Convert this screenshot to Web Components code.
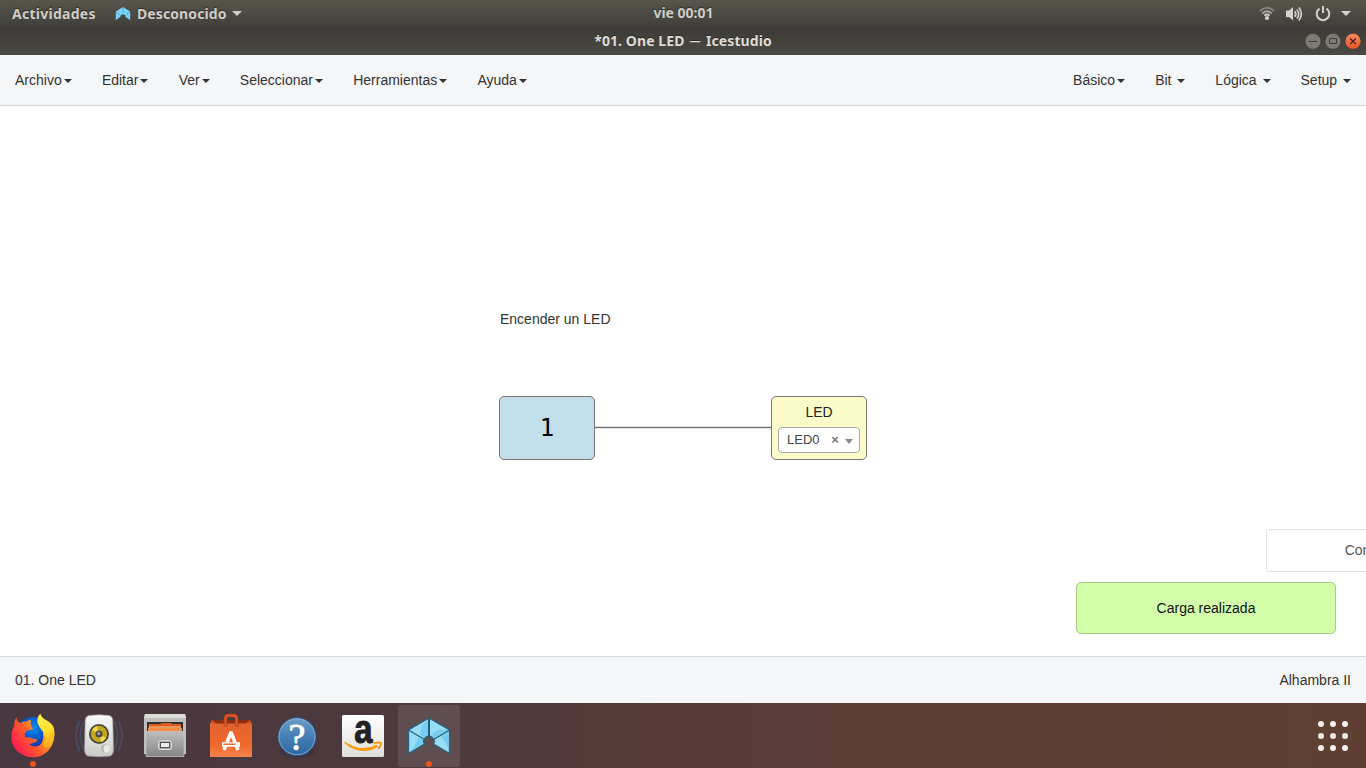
<!DOCTYPE html>
<html lang="es">
<head>
<meta charset="utf-8">
<title>Icestudio</title>
<style>
html,body{margin:0;height:100%;overflow:hidden}
body{font:14px/20px "Liberation Sans",Arial,sans-serif;color:#333;background:#fff}
</style>
</head>
<body>
<ice-desktop></ice-desktop>
<script>
const define = (name, css, html) => customElements.define(name, class extends HTMLElement {
  constructor() {
    super();
    const t = document.createElement('template');
    t.innerHTML = `<style>:host{box-sizing:border-box}*{box-sizing:border-box}svg{display:block;overflow:visible}${css}</style>${html}`;
    this.attachShadow({mode: 'open'}).appendChild(t.content.cloneNode(true));
  }
});

define('system-bar', `
:host{display:grid;grid-template-columns:1fr auto 1fr;height:27px;align-items:center;padding:0 15px 0 12px;background:linear-gradient(#58554c,#403f3a);color:#d0cdc6;font:bold 14px/20px "Noto Sans","Open Sans",sans-serif;text-shadow:0 -1px 1px #2b2a27}
.l,.r{display:flex;align-items:center}.r{justify-content:flex-end}
.act{width:83px;letter-spacing:.26px;white-space:nowrap}.app{margin-left:6px;width:90px;letter-spacing:.1px;white-space:nowrap}.logo{margin-left:20px}
.clock{position:relative;top:-1px;left:2px}
`, `
<div class="l"><span class="act">Actividades</span>
<svg class="logo" width="16" height="14" viewBox="0 0 16 14"><path fill="#78d4fa" d="M.8 4.500 8 0 15.200 4.500v8.500l-4.500-3Q10.500 7.500 8 7.300 5.500 7.500 5.300 10L.8 13Z"/><path d="M8 .5V6M1 5l4.500 3.500M15 5l-4.500 3.500" stroke="#287b9b" stroke-width=".7" stroke-dasharray="1.500 .8"/></svg>
<span class="app">Desconocido</span>
<svg style="margin-left:5px" width="10" height="5"><path fill="#d0cdc6" d="M0 0h10L5 5Z"/></svg></div>
<div class="clock">vie 00:01</div>
<div class="r">
<svg width="16" height="15" viewBox="0 0 16 15" fill="none" stroke-width="1.8"><path stroke="#85827b" d="M1 5Q8-1.5 15 5"/><path stroke="#aaa79f" d="M3.300 7.500Q8 3 12.700 7.500"/><path stroke="#d5d2cb" d="M5.400 9.600Q8 7.500 10.600 9.600"/><circle cx="8" cy="12" r="2.100" fill="#d5d2cb"/></svg>
<svg style="margin-left:11px" width="17" height="16" viewBox="0 0 17 16" fill="none" stroke="#d5d2cb" stroke-width="1.700"><path fill="#d5d2cb" stroke="none" d="M0 4.500h3L7 1v13.500L3 11H0Z"/><path d="M8.700 5.200q2.300 2.800 0 5.600M10.900 3.400q3.600 4.600 0 9.200M12.900 1.600q5 6.400 0 12.800"/></svg>
<svg style="margin-left:12px" width="16" height="16" viewBox="0 0 16 16" fill="none" stroke="#d5d2cb" stroke-width="2"><path d="M4.500 2.600a6.300 6.300 0 1 0 7 0M8 0v7"/></svg>
<svg style="margin-left:10px" width="10" height="5"><path fill="#d5d2cb" d="M0 0h10L5 5Z"/></svg></div>
`);

define('title-bar', `
:host{display:grid;grid-template-columns:1fr auto 1fr;height:28px;align-items:center;padding:0 5px;background:linear-gradient(#3c3b37,#4a4842);color:#dfdbd2;font:bold 14px/20px "Noto Sans","Open Sans",sans-serif;text-shadow:0 -1px #2b2a27}
.t{grid-column:2;white-space:nowrap;letter-spacing:.08px}.d{display:inline-block;transform:scaleX(.8);font-weight:400}
.b{display:flex;gap:4px;justify-content:flex-end}
`, `
<div class="t">*01. One LED <span class="d">—</span> Icestudio</div>
<div class="b">
<svg width="16" height="17" viewBox="0 0 16 17"><circle cx="8" cy="8.300" r="8" fill="#7c7a73" stroke="#33322e" stroke-width=".6"/><path d="M4 8.500h8" stroke="#3c3b37"/></svg>
<svg width="16" height="17" viewBox="0 0 16 17"><circle cx="8" cy="8.300" r="8" fill="#7c7a73" stroke="#33322e" stroke-width=".6"/><path d="M4.500 5.500h7v5h-7Z" fill="none" stroke="#3c3b37"/></svg>
<svg width="16" height="17" viewBox="0 0 16 17"><defs><linearGradient id="c" x2="0" y2="1"><stop stop-color="#f68a65"/><stop offset="1" stop-color="#e95420"/></linearGradient></defs><circle cx="8" cy="8.300" r="8" fill="url(#c)" stroke="#33322e" stroke-width=".6"/><path d="m5.200 5.500 5.600 5.600m0-5.600-5.600 5.600" stroke="#3c2218" stroke-width="1.300"/></svg>
</div>`);

define('menu-item', `
:host{display:flex;align-items:center;padding:0 15px;white-space:pre}
svg{margin-left:2px;position:relative;top:1px}
:host(:not([slot])) svg{margin-right:.2px}
`, `<slot></slot><svg width="8" height="4"><path fill="#333" d="M0 0h8L4 4Z"/></svg>`);

define('menu-bar', `
:host{display:flex;justify-content:space-between;height:51px;background:#f5f6f8;border-bottom:1px solid #d4d7da}
div{display:flex}
`, `<div><slot></slot></div><div><slot name="right"></slot></div>`);

define('const-block', `
:host{display:flex;align-items:center;justify-content:center;width:96px;height:64px;background:#c0dfea;border:1px solid #777;border-radius:5px;color:#000;font:24px/28px "DejaVu Sans Mono",monospace;padding-bottom:1px}
`, `<slot></slot>`);

define('output-block', `
:host{display:flex;flex-direction:column;width:96px;height:64px;background:#fbfac9;border:1px solid #777;border-radius:5px;padding:5px 6px 6px;color:#222;text-align:center}
.s{display:flex;align-items:center;margin-top:5px;height:26px;border:1px solid #aaa;border-radius:4px;background:#fff;color:#444;font-size:13px;padding:0 6px 1px 8px}
.x{margin-left:auto;width:8px;font-weight:bold;color:#777}
.a{margin:3px 0 0 6px;border:4px solid transparent;border-top:5px solid #888;border-bottom:0}
`, `<slot></slot><div class="s"><span>LED0</span><span class="x">×</span><span class="a"></span></div>`);

define('design-canvas', `
:host{display:block;position:relative;height:550px;background:#fff;overflow:hidden}
.note,.c,.o,.w,.toast{position:absolute}
.note{left:500px;top:203px}.c{left:499px;top:290px}.o{left:771px;top:290px}
.w{left:595px;top:320px}
.toast{width:260px;border:1px solid;display:flex;align-items:center;justify-content:center}
.ok{left:1076px;top:476px;height:52px;background:#d3ffab;border-color:#a7cc85;border-radius:5px;color:#111}
.next{left:1266px;top:423px;height:43px;background:#fff;border-color:#e4e4e4;border-radius:2px;color:#555;justify-content:flex-start;padding:0 0 1px 77.700px}
`, `
<div class="note">Encender un LED</div>
<svg class="w" width="176" height="3"><path d="M0 1.500h176" stroke="#777" stroke-width="1.500"/></svg>
<const-block class="c">1</const-block><output-block class="o">LED</output-block>
<div class="toast next">Con</div><div class="toast ok">Carga realizada</div>`);

define('status-bar', `
:host{display:flex;justify-content:space-between;align-items:center;height:47px;padding:0 15px;background:#f5f6f8;border-top:1px solid #d4dadd}
`, `<slot></slot>`);

define('dock-item', `
:host{display:flex;align-items:center;justify-content:center;width:62px;height:62px;border-radius:3px;position:relative}
:host([active]){background:rgba(255,255,255,.1)}
i{display:none;position:absolute;left:28px;bottom:0;width:6px;height:6px;border-radius:50%;background:#e95420}
:host([running]) i{display:block}
`, `<slot></slot><i></i>`);

define('app-dock', `
:host{display:flex;justify-content:space-between;height:65px;background:linear-gradient(90deg,#48383f 0,#4d393d 33%,#593b36 50%,#603f33 100%);padding:2px 18px 0 2px}
.apps{display:flex;gap:4px}.grid{margin-top:15px}
`, `
<div class="apps">
<dock-item running><svg width="46" height="46" viewBox="0 0 46 46"><defs>
<radialGradient id="fb" cx=".5" cy=".3" r=".6"><stop stop-color="#0a8fe8"/><stop offset=".5" stop-color="#0558cc"/><stop offset="1" stop-color="#1b2590"/></radialGradient>
<linearGradient id="fo" x1=".95" y1=".2" x2=".1" y2=".75"><stop stop-color="#ffe23a"/><stop offset=".3" stop-color="#ffa41c"/><stop offset=".6" stop-color="#ff5a2a"/><stop offset="1" stop-color="#ff1f50"/></linearGradient>
<linearGradient id="fy" x2=".3" y2="1"><stop stop-color="#fff84f"/><stop offset=".6" stop-color="#ffe02e"/><stop offset="1" stop-color="#ffb020"/></linearGradient></defs>
<circle cx="23" cy="22.500" r="18.500" fill="url(#fb)"/>
<path fill="url(#fo)" d="M6.500 4Q6.500 8.500 10 10 13 8 16 8.500L21 6.500 20.500 11 23 16 16.500 18Q13.500 21 15.500 24.500 20 23.500 22 25.500 26 25 27.500 27 25 30.500 19 31 24 35.500 30 32 34 28 33 20L43.500 15Q47 28 38 38 29 46.500 17 43.500 5 40 1.800 29 .5 20 4 13 4 8 6.500 4Z"/>
<path fill="url(#fy)" d="M30.500.5Q26.500 4.500 27.500 10 29 14 32.500 18 37.500 25 33 33 38 36 42 29 46 22 43.500 14 41 9 35 6.500 31 4 30.500.5Z"/></svg></dock-item>
<dock-item><svg width="50" height="46" viewBox="0 0 50 46" fill="none"><defs><linearGradient id="sp" x2="0" y2="1"><stop stop-color="#fafafa"/><stop offset="1" stop-color="#c9c9c6"/></linearGradient></defs>
<g stroke="#476288" stroke-width="2"><path d="M9.500 9Q3 22 9.500 36M5.500 8Q-1.500 22 5.500 38M40.500 9q6.500 13 0 27M44.500 8q7 14 0 30" opacity=".45"/></g>
<path fill="url(#sp)" stroke="#969692" stroke-width=".7" d="M15 2.500Q25 1 35 2.500 38.500 3 38.800 7l.7 28Q40 41 36.500 43 25 44.500 13.500 43 10 41 10.500 35l.7-28Q11.500 3 15 2.500Z"/>
<circle cx="25" cy="21" r="10" fill="#47443b"/><circle cx="25" cy="21" r="8.200" fill="#c6a719"/><path fill="#eed957" d="M25 21 18 17a8 8 0 0 1 5-4Zm0 0 7 4a8 8 0 0 1-5 4Z"/><circle cx="25" cy="21" r="3.500" fill="#494947"/><circle cx="24.700" cy="20.500" r="1.700" fill="#999"/><ellipse cx="31" cy="35.500" rx="3.500" ry="4" fill="#b3b3b1"/><ellipse cx="32.500" cy="35.700" rx="3" ry="3.700" fill="#e9e9e8"/><rect x="16" y="35" width="4" height="5" stroke="#ccc"/></svg></dock-item>
<dock-item><svg width="46" height="46" viewBox="0 0 46 46"><defs><linearGradient id="cb" x2="0" y2="1"><stop stop-color="#bdbdbd"/><stop offset="1" stop-color="#858585"/></linearGradient></defs>
<path fill="#bebebe" d="M3 1h40l1 4v36H2V5Z"/><path fill="#deddda" d="M3 1h40l1 4H2Z"/><path fill="#302f2d" d="M5 9h36v10H5Z"/><path fill="#d95c20" d="M7 11h11l2-1h9l1 1h9v8H6Z"/><path fill="#ef8d48" d="M6 15h34v4H6Z"/><path stroke="#ffce9e" d="M7 14h32"/><path fill="url(#cb)" stroke="#c8c8c8" stroke-width=".7" d="M4 18.500h38v25H4Z"/><rect x="16.500" y="27.500" width="13" height="9" rx="2" fill="#aaa" stroke="#ddd"/><rect x="18.500" y="29.500" width="9" height="5" fill="#eee" stroke="#555"/></svg></dock-item>
<dock-item><svg width="46" height="46" viewBox="0 0 46 46"><defs><linearGradient id="bg" x2="0" y2="1"><stop stop-color="#e0642f"/><stop offset=".65" stop-color="#f1692c"/><stop offset="1" stop-color="#f4844f"/></linearGradient></defs>
<path fill="#8a2e12" d="M4 7h38l2 4H2Z"/><path fill="#d84e20" d="M4 7 9 11H2ZM42 7l2 4h-7Z"/><path fill="url(#bg)" d="M2 10.500h42V44H2Z"/><path d="M17.500 14V5.500q0-3 3-3h5q3 0 3 3V14" fill="none" stroke="#b53c15" stroke-width="3.500"/><path d="M17.500 14V5.500q0-3 3-3h5q3 0 3 3V14" fill="none" stroke="#dc5826" stroke-width="2"/>
<path fill="none" stroke="#fff" stroke-width="3.500" d="m16 37 6.700-17h.6L30 37"/><path d="M14 31.500h18" stroke="#fff" stroke-width="4.500"/><path d="M15.500 31.200h12" stroke="#e95d26" stroke-width="1.400"/></svg></dock-item>
<dock-item><svg width="46" height="46" viewBox="0 0 46 46"><defs><linearGradient id="hp" x2="0" y2="1"><stop stop-color="#6b9dc9"/><stop offset=".5" stop-color="#447eb5"/><stop offset="1" stop-color="#2b67a1"/></linearGradient></defs><ellipse cx="23" cy="39" rx="18" ry="5.500" fill="#352d36" opacity=".4"/><circle cx="23" cy="23.700" r="19" fill="url(#hp)" stroke="#28517d"/><circle cx="23" cy="23.700" r="18" fill="none" stroke="#8fb5d5" stroke-width=".8"/><text x="23" y="37" text-anchor="middle" fill="#fff" stroke="#fff" stroke-width=".8" style="font:38px 'Liberation Serif',serif">?</text></svg></dock-item>
<dock-item><svg width="46" height="46" viewBox="0 0 46 46"><defs><linearGradient id="az" x2="0" y2="1"><stop stop-color="#fff"/><stop offset="1" stop-color="#dededd"/></linearGradient></defs><rect x="2" y="2" width="42" height="42" rx="1.500" fill="url(#az)"/><text transform="translate(23.300 30.300) scale(.82 1)" text-anchor="middle" fill="#222" stroke="#222" stroke-width="1" style="font:bold 40px/40px 'Liberation Sans',sans-serif">a</text><path fill="#f90" d="M4.500 28.500Q20 39.500 36.500 32L38 33.500Q33 37.500 24 38 13 38 4.500 30Z"/><path fill="none" stroke="#f90" stroke-width="2" d="M33.500 30.500q6-2 7.500-.5.300 2-2.500 6"/></svg></dock-item>
<dock-item running active><svg width="46" height="46" viewBox="0 0 46 46"><g fill="#99ddf5"><path d="M2.500 17 23 5 43.500 17V40.500L27.500 31A5.200 5.200 0 1 0 18.500 31L2.500 40.500Z"/></g><path fill="#75cdf3" d="M14 21Q14 12 22 8v15l-4 2ZM26 21Q32 15 41 17l-13 8ZM4 38Q9 34 12 24l6 4v3ZM34 22l8-5v17Q38 27 34 22Z"/><path fill="none" stroke="#24657f" stroke-width="1.400" stroke-linejoin="round" d="M2.500 17 23 5 43.500 17V40.500L27.500 31A5.200 5.200 0 1 0 18.500 31L2.500 40.500ZM2.500 17 18.500 26.500M43.500 17 27.500 26.500"/><path d="M23 5v18.500" stroke="#235d73" stroke-width="2"/></svg></dock-item>
</div>
<svg class="grid" width="30" height="32" viewBox="0 0 30 32" fill="#f2efec"><circle cx="3" cy="4" r="3"/><circle cx="15" cy="4" r="3"/><circle cx="27" cy="4" r="3"/><circle cx="3" cy="16" r="3"/><circle cx="15" cy="16" r="3"/><circle cx="27" cy="16" r="3"/><circle cx="3" cy="28" r="3"/><circle cx="15" cy="28" r="3"/><circle cx="27" cy="28" r="3"/></svg>`);

define('ice-desktop', `:host{display:flex;flex-direction:column;width:1366px;height:768px;overflow:hidden}:host>*{flex:none}`, `
<system-bar></system-bar><title-bar></title-bar>
<menu-bar><menu-item>Archivo</menu-item><menu-item>Editar</menu-item><menu-item>Ver</menu-item><menu-item>Seleccionar</menu-item><menu-item>Herramientas</menu-item><menu-item>Ayuda</menu-item>
<menu-item slot="right">Básico</menu-item><menu-item slot="right">Bit </menu-item><menu-item slot="right">Lógica </menu-item><menu-item slot="right">Setup </menu-item></menu-bar>
<design-canvas></design-canvas>
<status-bar><span>01. One LED</span><span>Alhambra II</span></status-bar>
<app-dock></app-dock>`);
</script>
</body>
</html>
